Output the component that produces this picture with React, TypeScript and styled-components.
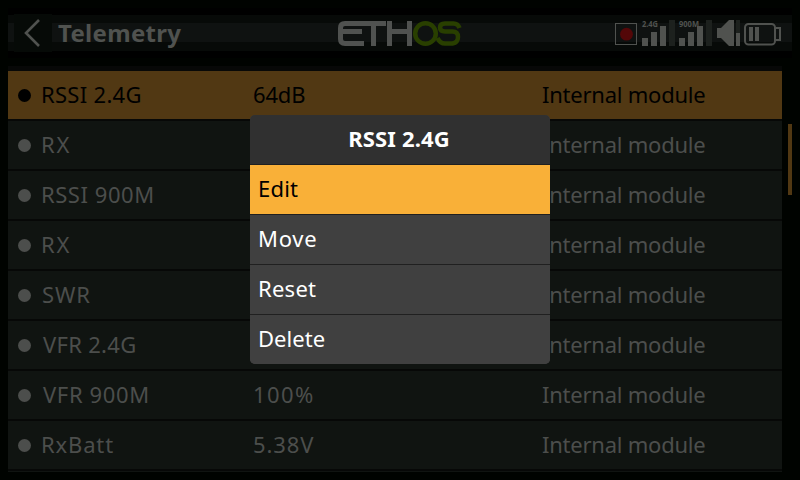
import React from "react";
import styled, { createGlobalStyle } from "styled-components";

const GlobalStyle = createGlobalStyle`
  * { box-sizing: border-box; }
  body { margin: 0; background: #000300; overflow: hidden; }
`;

const Screen = styled.main`
  position: relative;
  width: 800px;
  height: 480px;
  overflow: hidden;
  background: #000300;
  font-family: "Noto Sans", sans-serif;
  font-size: 22px;
  color: #50524f;
`;

const TopBar = styled.header`
  display: grid;
  grid-template-columns: 330px 277px 1fr;
  height: 66px;
  margin: 0 8px;
  background: linear-gradient(
    #000300 0 8px, #000000 8px 15px, #070a08 15px 23px, #0f1211 23px 42px,
    #070a08 42px 51px, #000000 51px 58px, #000300 58px
  );
`;

const Heading = styled.div`
  display: flex;
  align-items: flex-start;
  padding: 14px 0 0 6px;
`;

const BackButton = styled.button`
  width: 38px;
  height: 38px;
  padding: 0;
  border: 0;
  background: #060a07;
  color: #50524f;
  svg { display: block; }
`;

const Title = styled.h1`
  margin: 0 0 0 6px;
  font-size: 24px;
  line-height: 38px;
  font-weight: 700;
  letter-spacing: 0.3px;
`;

const Graphic = styled.svg`
  display: block;
`;

const List = styled.section`
  width: 774px;
  height: 406px;
  margin-left: 8px;
  padding-top: 5px;
  background: #070807;
  overflow: hidden;
`;

const Row = styled.div<{ $selected?: boolean }>`
  display: grid;
  grid-template-columns: 33px 212px 289px 1fr;
  height: 48px;
  margin-bottom: 2px;
  line-height: 47px;
  white-space: pre;
  background: ${(p) => (p.$selected ? "#513813" : "#101411")};
  color: ${(p) => (p.$selected ? "#000000" : "#4c4e4c")};
`;

const Dot = styled.i`
  width: 13px;
  height: 13px;
  margin: 18px 0 0 10px;
  border-radius: 50%;
  background: currentColor;
`;

const Cell = styled.span<{ $spacing: number; $indent?: number }>`
  padding-left: ${(p) => p.$indent ?? 0}px;
  letter-spacing: ${(p) => p.$spacing}px;
`;

const Scrollbar = styled.div`
  position: absolute;
  left: 788px;
  top: 124px;
  width: 4px;
  height: 71px;
  background: #513813;
`;

const Menu = styled.div`
  position: absolute;
  left: 250px;
  top: 115px;
  width: 300px;
  height: 249px;
  border-radius: 5px;
  overflow: hidden;
  background: #404040;
  color: #fff;
`;

const MenuTitle = styled.div`
  height: 50px;
  line-height: 46px;
  padding-right: 2px;
  border-bottom: 1px solid #202020;
  text-align: center;
  font-weight: 700;
  letter-spacing: 0.15px;
  background: #303030;
`;

const MenuItem = styled.div<{ $active?: boolean; $spacing: number }>`
  height: 50px;
  padding-left: 8px;
  line-height: 47px;
  letter-spacing: ${(p) => p.$spacing}px;
  border-bottom: 1px solid #202020;
  background: ${(p) => (p.$active ? "#f9b038" : "#404040")};
  color: ${(p) => (p.$active ? "#000" : "#fff")};
  &:last-child { border-bottom: 0; }
`;

interface Sensor {
  name: string;
  spacing: number;
  indent?: number;
  value?: string;
  valueSpacing?: number;
}

const sensors: Sensor[] = [
  { name: "RSSI 2.4G", spacing: 0.3, value: "64dB", valueSpacing: -0.15 },
  { name: "RX", spacing: 1.7 },
  { name: "RSSI 900M", spacing: 0.55 },
  { name: "RX", spacing: 1.7 },
  { name: "SWR", spacing: 0.8, indent: 1 },
  { name: "VFR 2.4G", spacing: 0.3, indent: 2 },
  { name: "VFR 900M", spacing: 0.65, indent: 2, value: "100%", valueSpacing: 1.4 },
  { name: "RxBatt", spacing: 0.85, value: "5.38V", valueSpacing: 0.9 },
];

const actions = [
  { label: "Edit", spacing: 0.2 },
  { label: "Move", spacing: 0.75 },
  { label: "Reset", spacing: 0.25 },
  { label: "Delete", spacing: 0.05 },
];

const Logo = () => (
  <Graphic width="277" height="66" viewBox="338 0 277 66" fill="none" strokeWidth="5">
    <g stroke="#505250">
      <path d="M386 23.5H345Q340.5 23.5 340.5 28V39Q340.5 43.5 345 43.5H364M340.5 31.5H362M373.5 23.5V46M389.5 21V46M409.5 21V46M389.5 31.5H409.5" />
    </g>
    <g stroke="#293f00" strokeWidth="4.5">
      <circle cx="425.5" cy="33.5" r="10.3" />
      <path d="M459.5 28Q458 23.5 453.5 23.5H445Q440 23.5 440 27.5T445 31.5H452.5Q458 31.5 458 37T452.5 43.5H445Q440 43.5 437.5 38" />
    </g>
  </Graphic>
);

const Signal = ({ x, label, width }: { x: number; label: string; width: number }) => (
  <g transform={`translate(${x} 0)`} fill="#50524f">
    <path d="M0 38h6v8h-6zM9 32h6v14h-6zM18 26h6v20h-6z" />
    <path d="M27 20h6v26h-6z" fill="#1d211e" />
    <text x="0" y="26.5" fontSize="8" fontWeight="700" textLength={width} lengthAdjust="spacingAndGlyphs">
      {label}
    </text>
  </g>
);

const StatusIcons = () => (
  <Graphic width="177" height="66" viewBox="615 0 177 66">
    <rect x="615.5" y="23.5" width="21" height="21" fill="none" stroke="#50524f" />
    <circle cx="626.5" cy="34.2" r="6.4" fill="#530708" />
    <Signal x={642} label="2.4G" width={16} />
    <Signal x={679} label="900M" width={20} />
    <path d="M717 28H721L729 20H734V46H729L721 38H717Z" fill="#50524f" />
    <path d="M736 20h4v13h-4z" fill="#1d211e" />
    <path d="M736 33h4v13h-4zM749 27h4v14h-4zM755 27h4v14h-4z" fill="#50524f" />
    <g fill="none" stroke="#50524f" strokeWidth="2">
      <rect x="745" y="24" width="30" height="20.5" rx="3.5" />
      <path d="M776 28H780V40H776" />
    </g>
  </Graphic>
);

export default function App() {
  return (
    <>
      <GlobalStyle />
      <Screen>
        <TopBar>
          <Heading>
            <BackButton aria-label="Back">
              <svg width="38" height="38" viewBox="0 0 38 38" fill="none" stroke="currentColor" strokeWidth="2.6">
                <path d="M25 6L12 19L25 32" />
              </svg>
            </BackButton>
            <Title>Telemetry</Title>
          </Heading>
          <Logo />
          <StatusIcons />
        </TopBar>
        <List>
          {sensors.map((s, i) => (
            <Row key={i} $selected={i === 0}>
              <Dot />
              <Cell $spacing={s.spacing} $indent={s.indent}>{s.name}</Cell>
              <Cell $spacing={s.valueSpacing ?? 0}>{s.value}</Cell>
              <Cell $spacing={-0.23}>Internal module</Cell>
            </Row>
          ))}
          <Row />
        </List>
        <Scrollbar />
        <Menu role="menu">
          <MenuTitle>RSSI 2.4G</MenuTitle>
          {actions.map((a, i) => (
            <MenuItem key={a.label} role="menuitem" $active={i === 0} $spacing={a.spacing}>
              {a.label}
            </MenuItem>
          ))}
        </Menu>
      </Screen>
    </>
  );
}
